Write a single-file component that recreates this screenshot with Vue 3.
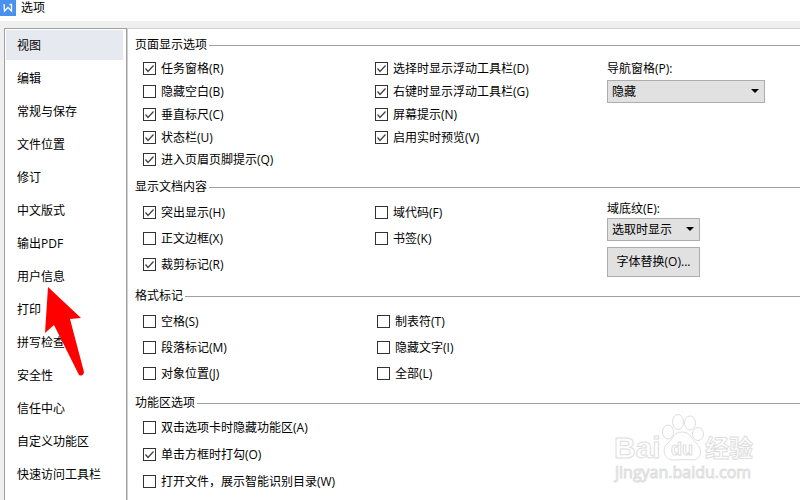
<template>
  <div class="dialog">
    <header class="title-bar">
      <svg class="logo" viewBox="0 0 16 16" aria-hidden="true">
        <rect width="16" height="16" fill="#4a90ee" />
        <path d="M4 4L4.500 11L8 7.500L11.500 11V4.500H9.500" fill="none" stroke="#fff" stroke-width="1.300" />
      </svg>
      <h1>选项</h1>
    </header>

    <div class="body">
      <nav class="sidebar">
        <button
          v-for="name in tabs"
          :key="name"
          type="button"
          class="tab"
          :class="{ active: name === current }"
          @click="current = name"
        >{{ name }}</button>
      </nav>

      <main class="panel">
        <section v-for="group in groups" :key="group.key" class="group" :class="group.key">
          <h2>{{ group.title }}</h2>
          <div class="columns">
            <div v-for="(column, i) in group.columns" :key="i" class="column">
              <label v-for="opt in column" :key="opt.text" class="option">
                <input v-model="opt.checked" type="checkbox" />
                <svg v-if="opt.checked" class="tick" viewBox="0 0 13 13" aria-hidden="true">
                  <path d="M2.500 6.500l2.500 3 5.500-6" />
                </svg>
                <span>{{ opt.text }}</span>
              </label>
            </div>
            <div v-if="group.field" class="side">
              <label class="field-label" :for="group.field.id">{{ group.field.label }}</label>
              <div class="select-box">
                <select :id="group.field.id" v-model="group.field.value">
                  <option v-for="o in group.field.options" :key="o">{{ o }}</option>
                </select>
                <svg class="caret" viewBox="0 0 8 4" aria-hidden="true"><path d="M0 0h8L4 4z" /></svg>
              </div>
              <button v-if="group.button" type="button" class="replace-btn">{{ group.button }}</button>
            </div>
          </div>
        </section>
      </main>
    </div>

    <svg class="arrow" viewBox="0 0 40 92" aria-hidden="true">
      <path d="M4 2L37 33L26 34L40 87Q39 92 35 90L10 40L1 48Z" fill="#f00" />
    </svg>

    <svg class="watermark" viewBox="0 0 150 76" aria-hidden="true">
      <g fill="#fff" stroke="#dedede" stroke-width="1">
        <text x="2" y="48" class="brand">Bai</text>
        <ellipse cx="56" cy="22" rx="5.500" ry="7" />
        <ellipse cx="66" cy="12" rx="5.500" ry="7.500" />
        <ellipse cx="78" cy="13" rx="5.500" ry="7" />
        <ellipse cx="86" cy="24" rx="5.500" ry="6.500" />
        <path d="M70 22C62 22 61 29 56 33C49 38 52 50 61 50C66 50 74 49 80 50C90 50 91 39 84 33C79 29 79 22 70 22Z" />
        <text x="59" y="45" class="du">du</text>
        <text x="93" y="47" class="cn">经验</text>
        <text x="3" y="68" class="site">jingyan.baidu.com</text>
      </g>
    </svg>
  </div>
</template>

<script setup>
import { ref, reactive } from 'vue'

const tabs = [
  '视图', '编辑', '常规与保存', '文件位置', '修订', '中文版式', '输出PDF',
  '用户信息', '打印', '拼写检查', '安全性', '信任中心', '自定义功能区', '快速访问工具栏'
]
const current = ref('视图')

const on = (text) => ({ text, checked: true })
const off = (text) => ({ text, checked: false })

const groups = reactive([
  {
    key: 'page',
    title: '页面显示选项',
    columns: [
      [on('任务窗格(R)'), off('隐藏空白(B)'), on('垂直标尺(C)'), on('状态栏(U)'), on('进入页眉页脚提示(Q)')],
      [on('选择时显示浮动工具栏(D)'), on('右键时显示浮动工具栏(G)'), on('屏幕提示(N)'), on('启用实时预览(V)')]
    ],
    field: { id: 'nav-pane', label: '导航窗格(P):', value: '隐藏', options: ['隐藏', '靠左', '靠右'] }
  },
  {
    key: 'content',
    title: '显示文档内容',
    columns: [
      [on('突出显示(H)'), off('正文边框(X)'), on('裁剪标记(R)')],
      [off('域代码(F)'), off('书签(K)')]
    ],
    field: { id: 'shading', label: '域底纹(E):', value: '选取时显示', options: ['不显示', '显示', '选取时显示'] },
    button: '字体替换(O)...'
  },
  {
    key: 'marks',
    title: '格式标记',
    columns: [
      [off('空格(S)'), off('段落标记(M)'), off('对象位置(J)')],
      [off('制表符(T)'), off('隐藏文字(I)'), off('全部(L)')]
    ]
  },
  {
    key: 'ribbon',
    title: '功能区选项',
    columns: [
      [off('双击选项卡时隐藏功能区(A)'), on('单击方框时打勾(O)'), off('打开文件，展示智能识别目录(W)')]
    ]
  }
])
</script>

<style>
body {
  margin: 0;
  background: #efefef;
}
</style>

<style scoped>
.dialog {
  position: relative;
  display: flex;
  flex-direction: column;
  min-height: 100vh;
  overflow: hidden;
  background: #efefef;
  color: #000;
  font: 12px/18px "Open Sans", "Noto Sans CJK SC", sans-serif;
}

button,
select {
  font: inherit;
  color: inherit;
}

h1,
h2 {
  margin: 0;
  font-size: 12px;
  font-weight: normal;
}

.title-bar {
  display: flex;
  align-items: flex-start;
  gap: 5px;
  height: 21px;
  background: #fff;
}

.title-bar h1 {
  line-height: 16px;
}

.logo {
  width: 16px;
  height: 16px;
}

.body {
  display: flex;
  flex: 1;
  padding: 7px 0 0 4px;
}

.sidebar {
  display: flex;
  flex-direction: column;
  gap: 3px;
  flex: none;
  width: 117px;
  padding: 1px 3px 0 1px;
  border: 1px solid #a0a0a0;
  border-bottom: 0;
  background: #fff;
}

.tab {
  height: 30px;
  padding: 2px 11px 0;
  border: 0;
  background: none;
  text-align: left;
  white-space: nowrap;
}

.tab.active {
  background: #e6e9ef;
}

.panel {
  display: flex;
  flex-direction: column;
  gap: 8px;
  flex: 1;
  min-width: 0;
  padding: 7px 0 0 7px;
  border-top: 1px solid #d0d0d0;
  border-left: 1px solid #d0d0d0;
  background: #fff;
}

.group h2 {
  display: flex;
  align-items: center;
  gap: 2px;
  margin-bottom: 3px;
  line-height: 18px;
}

.group h2::after {
  content: "";
  flex: 1;
  height: 1px;
  background: #a0a0a0;
}

.columns {
  display: grid;
  grid-template-columns: 232px 232px 1fr;
  padding-left: 8px;
}

.marks .columns {
  grid-template-columns: 234px 1fr;
}

.ribbon .columns {
  grid-template-columns: 1fr;
}

.column {
  display: grid;
  align-content: start;
  grid-auto-rows: 26px;
}

.page .column {
  grid-template-rows: 23px 23px 23px 22px 22px;
}

.content .columns {
  padding-bottom: 2px;
}

.ribbon h2 {
  margin-bottom: 2px;
}

.ribbon .column {
  grid-auto-rows: 27px;
}

.option {
  position: relative;
  display: flex;
  align-items: center;
  gap: 5px;
  white-space: nowrap;
}

.option span {
  padding-top: 1px;
}

.option input {
  appearance: none;
  box-sizing: border-box;
  width: 13px;
  height: 13px;
  margin: 0;
  border: 1px solid #333;
  background: #fff;
}

.tick {
  position: absolute;
  left: 0;
  width: 13px;
  height: 13px;
  fill: none;
  stroke: #444;
  stroke-width: 1.3;
  pointer-events: none;
}

.side {
  display: flex;
  flex-direction: column;
  align-items: flex-start;
}

.field-label {
  line-height: 23px;
}

.content .field-label {
  line-height: 19px;
}

.select-box {
  position: relative;
  width: 158px;
}

.content .select-box {
  width: 93px;
}

select {
  appearance: none;
  display: block;
  box-sizing: border-box;
  width: 100%;
  height: 23px;
  padding: 0 4px;
  border: 1px solid #adadad;
  border-radius: 0;
  background: #e1e1e1;
}

.caret {
  position: absolute;
  top: 9px;
  right: 6px;
  width: 8px;
  height: 4px;
  pointer-events: none;
}

.replace-btn {
  width: 93px;
  height: 30px;
  margin-top: 6px;
  padding: 0;
  border: 1px solid #adadad;
  background: #e1e1e1;
  white-space: nowrap;
}

.arrow {
  position: absolute;
  top: 285px;
  left: 44px;
  width: 40px;
  height: 92px;
  pointer-events: none;
}

.watermark {
  position: absolute;
  top: 410px;
  left: 612px;
  width: 150px;
  height: 76px;
  pointer-events: none;
}

.brand {
  font: bold 30px "Liberation Sans", sans-serif;
}

.du {
  font: bold 18px "Liberation Sans", sans-serif;
}

.cn {
  font: bold 24px "Noto Sans CJK SC", sans-serif;
}

.site {
  font: 16px "Open Sans", sans-serif;
}
</style>
